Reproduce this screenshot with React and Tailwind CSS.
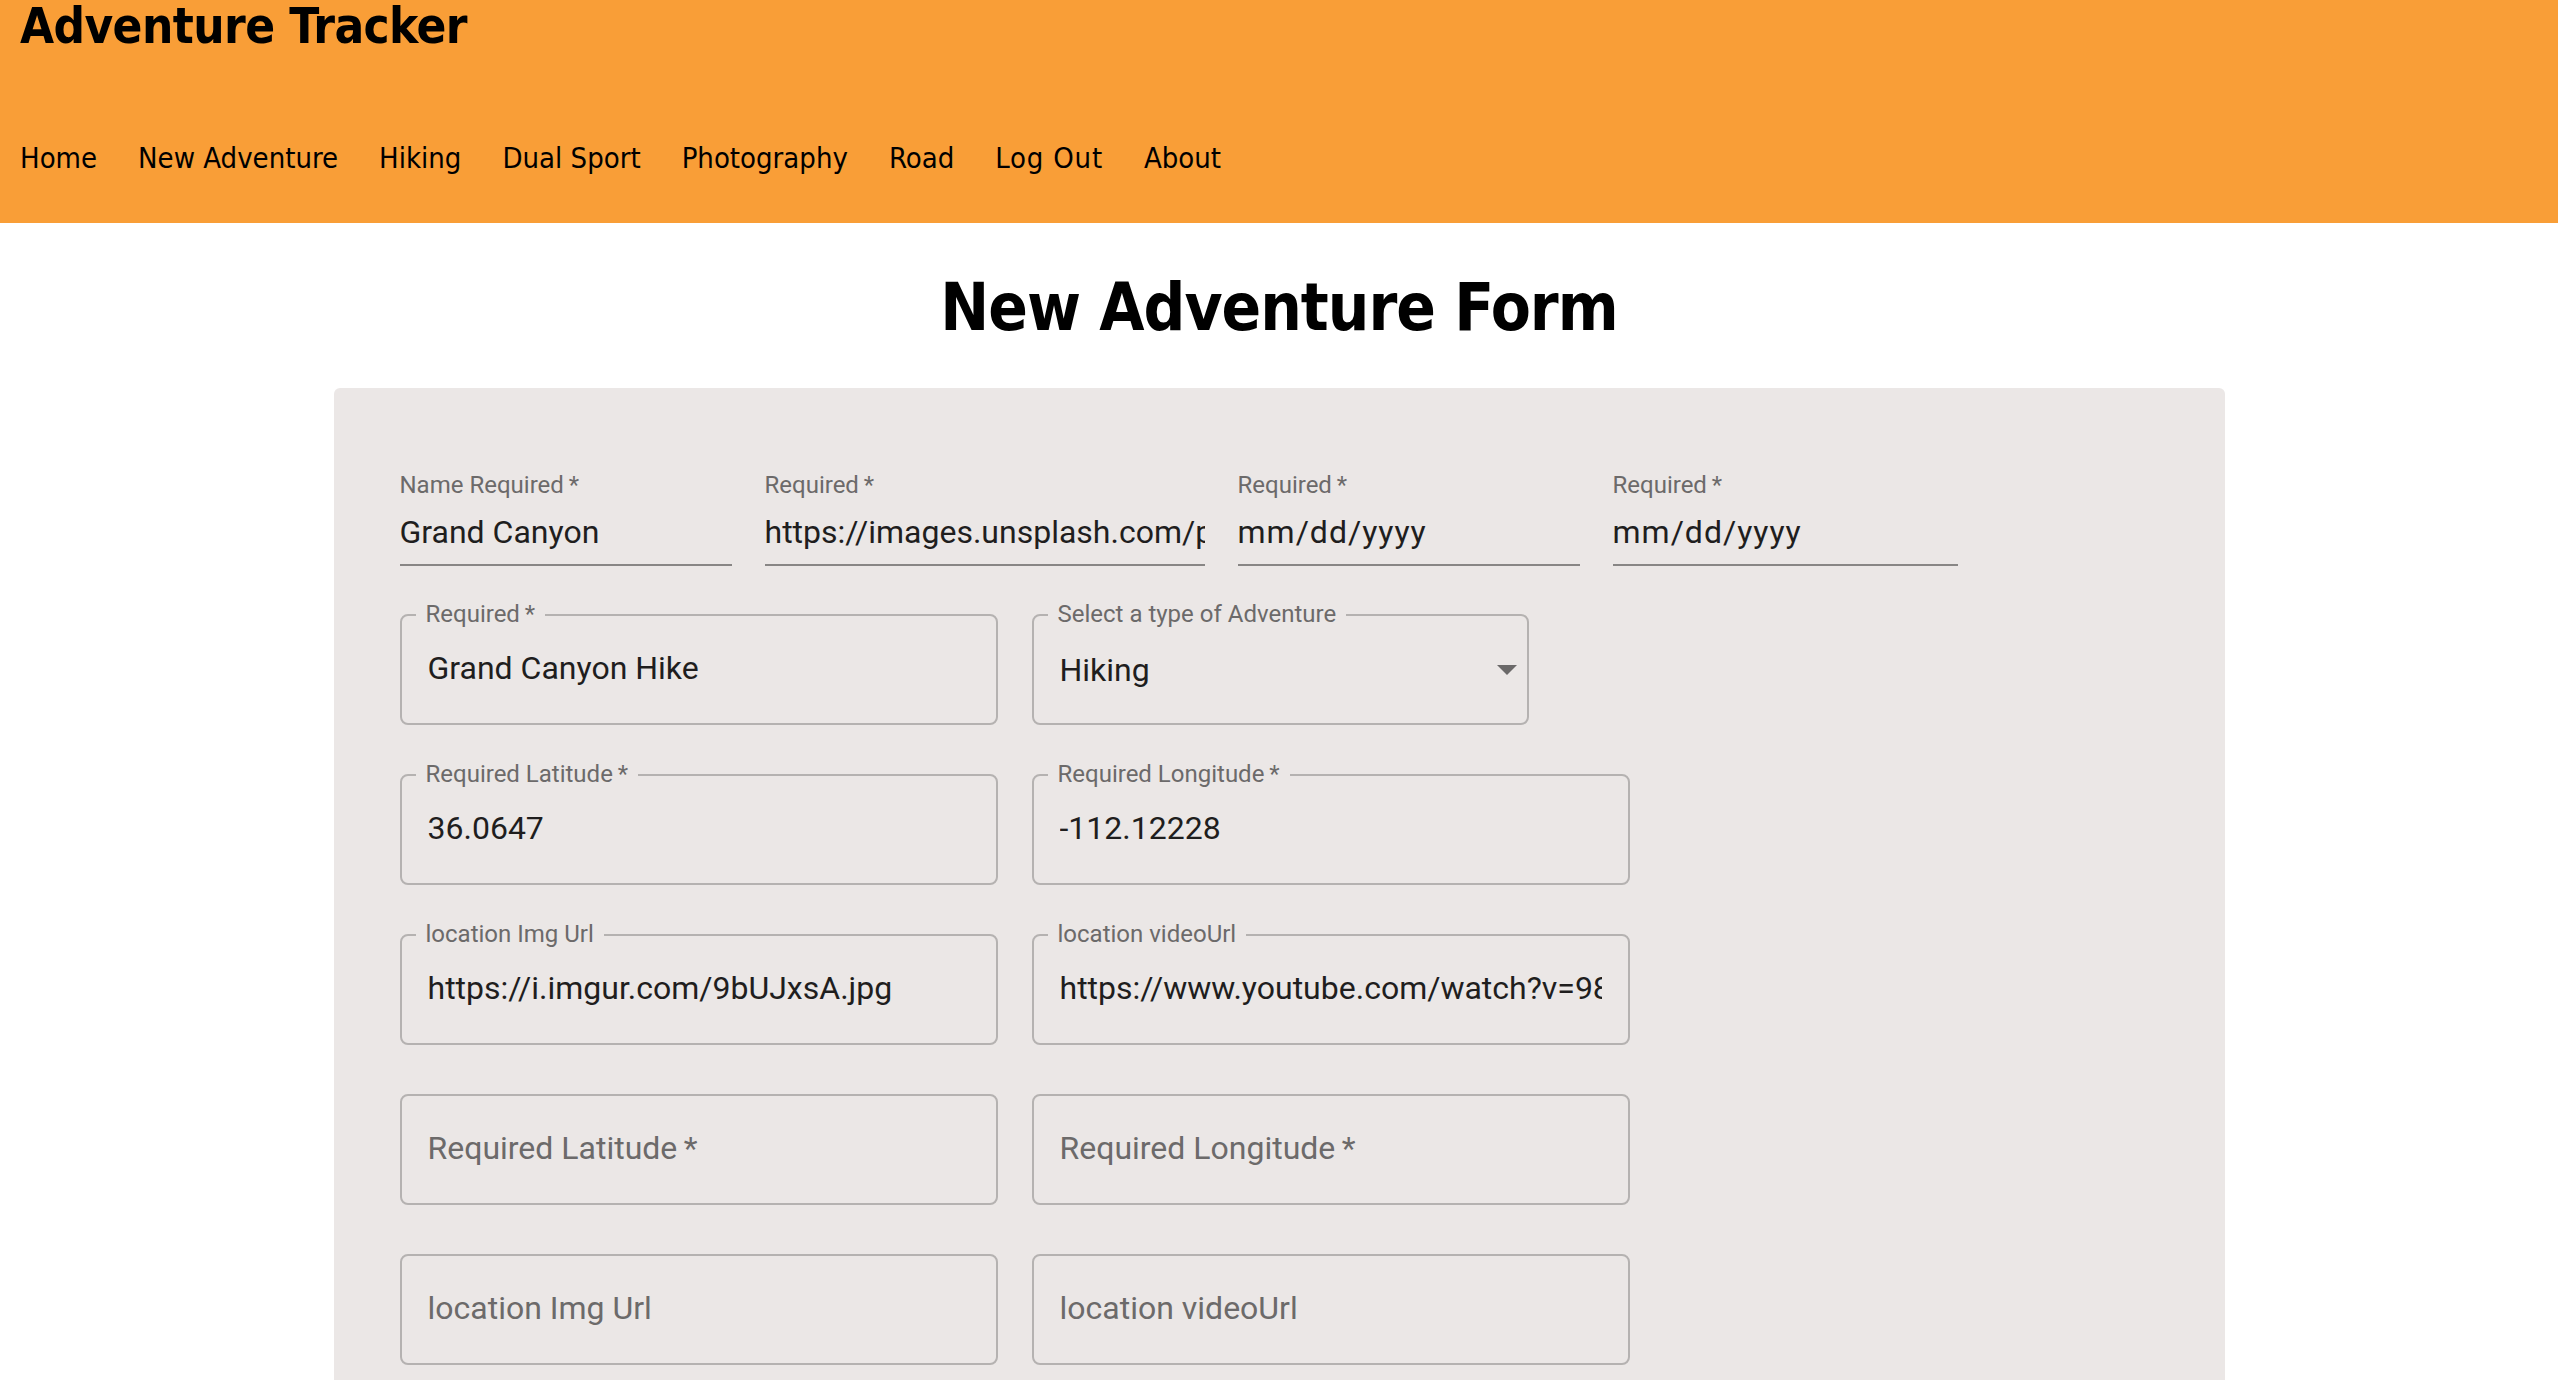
import React from 'react';

const navLinks = ['Home', 'New Adventure', 'Hiking', 'Dual Sport', 'Photography', 'Road', 'Log Out', 'About'];

const headFont = { fontFamily: '"DejaVu Sans Condensed", "DejaVu Sans", Verdana, sans-serif' };

// campo con linea inferior (estilo standard)
const UnderlineField = ({ label, value, width, date }) => {
  return (
    <div className={`${width} border-b-2 border-[#888685] pb-[9px]`}>
      <label className="block mt-[3px] text-[24px] leading-[24px] text-[#6c6a6a]">
        {label}
      </label>
      <input
        readOnly
        value={value}
        className={`block w-full mt-[12px] h-[46px] text-[32px] leading-[46px] text-[#1f1e1e] bg-transparent outline-none ${date ? 'tracking-[1px]' : ''}`}
      />
    </div>
  );
};

// campo con borde (estilo outlined)
const OutlinedField = ({ label, value, placeholder, width = 'w-[598px]' }) => {
  return (
    <div className={`relative ${width} h-[111px] border-2 border-[#b5b2b1] rounded-[8px] pt-[29px] px-[26px]`}>
      {label && (
        <span className="absolute left-[14px] top-[-14px] px-[10px] bg-[#ebe7e6] text-[24px] leading-[24px] text-[#6c6a6a] whitespace-nowrap">
          {label}
        </span>
      )}
      <input
        readOnly
        value={value || ''}
        placeholder={placeholder}
        className="block w-full h-[46px] text-[32px] leading-[46px] text-[#1f1e1e] placeholder:text-[#6c6a6a] placeholder:opacity-100 bg-transparent outline-none"
      />
    </div>
  );
};

const SelectField = ({ label, value }) => {
  return (
    <div className="relative w-[497px] h-[111px] border-2 border-[#b5b2b1] rounded-[8px] flex items-center pl-[26px] pr-[10px]">
      <span className="absolute left-[14px] top-[-14px] px-[10px] bg-[#ebe7e6] text-[24px] leading-[24px] text-[#6c6a6a] whitespace-nowrap">
        {label}
      </span>
      <span className="text-[32px] leading-[46px] text-[#1f1e1e] mt-[1px]">{value}</span>
      <svg className="ml-auto mt-[1px]" width="20" height="10" viewBox="0 0 20 10">
        <path d="M0 0 L20 0 L10 10 Z" fill="#6b6969" />
      </svg>
    </div>
  );
};

const App = () => {
  return (
    <div className="min-h-screen bg-white" style={{ fontFamily: 'Roboto, "Liberation Sans", sans-serif' }}>
      <header className="h-[223px] bg-[#f99e37] pl-[20px] text-black" style={headFont}>
        <h1 className="pt-[2px] text-[49px] leading-[49px] font-bold tracking-[-0.6px]">Adventure Tracker</h1>
        <nav className="mt-[93px] flex gap-[41px] text-[29px] leading-[29px]">
          {navLinks.map(link => (
            <a key={link} href="#" className={`text-black ${link === 'Log Out' ? 'tracking-[0.8px]' : ''}`}>{link}</a>
          ))}
        </nav>
      </header>

      <h2 className="mt-[52px] text-center text-[65px] leading-[65px] font-bold tracking-[-1px] text-black" style={headFont}>
        New Adventure Form
      </h2>

      <form className="mt-[48px] mx-auto w-[1891px] bg-[#ebe7e6] rounded-[6px] pt-[82px] pl-[66px] pb-[80px]">
        <div className="flex gap-[33px]">
          <UnderlineField label={'Name Required\u2009*'} value="Grand Canyon" width="w-[332px]" />
          <UnderlineField label={'Required\u2009*'} value="https://images.unsplash.com/photo-1474044159687-1ee9f3a51722" width="w-[440px]" />
          <UnderlineField label={'Required\u2009*'} value="mm/dd/yyyy" width="w-[342px]" date />
          <UnderlineField label={'Required\u2009*'} value="mm/dd/yyyy" width="w-[345px]" date />
        </div>

        <div className="mt-[48px] flex flex-col gap-[49px]">
          <div className="flex gap-[34px]">
            <OutlinedField label={'Required\u2009*'} value="Grand Canyon Hike" />
            <SelectField label="Select a type of Adventure" value="Hiking" />
          </div>
          <div className="flex gap-[34px]">
            <OutlinedField label={'Required Latitude\u2009*'} value="36.0647" />
            <OutlinedField label={'Required Longitude\u2009*'} value="-112.12228" />
          </div>
          <div className="flex gap-[34px]">
            <OutlinedField label="location Img Url" value="https://i.imgur.com/9bUJxsA.jpg" />
            <OutlinedField label="location videoUrl" value="https://www.youtube.com/watch?v=98ZSZbMxmhA" />
          </div>
          <div className="flex gap-[34px]">
            <OutlinedField placeholder={'Required Latitude\u2009*'} />
            <OutlinedField placeholder={'Required Longitude\u2009*'} />
          </div>
          <div className="flex gap-[34px]">
            <OutlinedField placeholder="location Img Url" />
            <OutlinedField placeholder="location videoUrl" />
          </div>
        </div>
      </form>
    </div>
  );
};

export default App;
